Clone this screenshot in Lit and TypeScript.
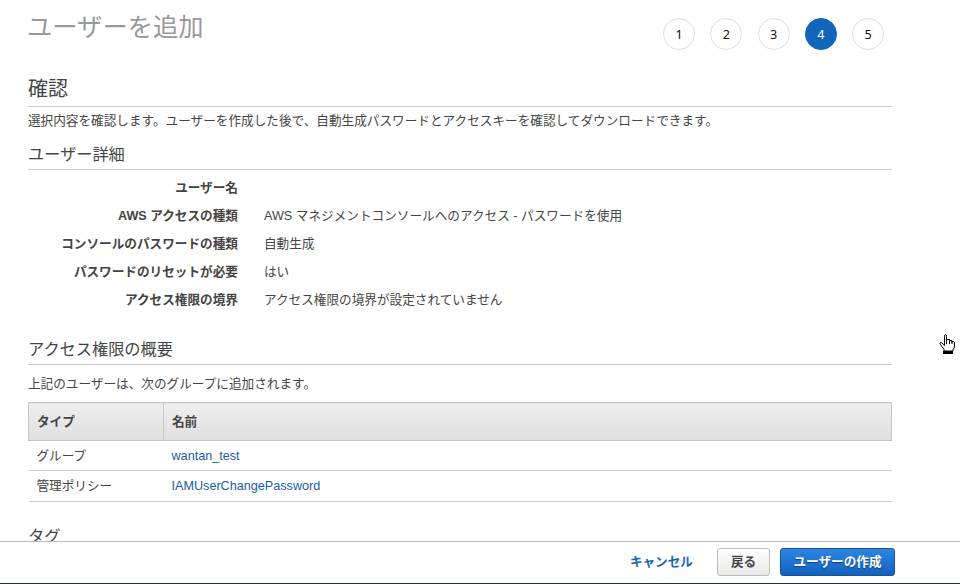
import { LitElement, html, css, svg } from "lit";
import { customElement } from "lit/decorators.js";
import { classMap } from "lit/directives/class-map.js";

const STEPS = [1, 2, 3, 4, 5];
const ACTIVE_STEP = 4;

const DETAILS: [string, string][] = [
  ["ユーザー名", ""],
  ["AWS アクセスの種類", "AWS マネジメントコンソールへのアクセス - パスワードを使用"],
  ["コンソールのパスワードの種類", "自動生成"],
  ["パスワードのリセットが必要", "はい"],
  ["アクセス権限の境界", "アクセス権限の境界が設定されていません"],
];

const GRANTS: [string, string][] = [
  ["グループ", "wantan_test"],
  ["管理ポリシー", "IAMUserChangePassword"],
];

const hand = svg`
  <path d="M5.5 11.5V2.5Q5.5 .5 6.5 .5Q7.5 .5 7.5 2.5V7.5V5.5H10.5V7.5V6.5H13V8.5V7.5H14.5Q15.5 8 15.5 9V13L14 15.5V17H5V15.5L1.5 10.5Q.5 9 1.5 8.5Q3 8 5.5 11.5Z" fill="#fff" stroke="#000"/>
  <path d="M10.5 6V10M13 7V10M7.5 6V10" stroke="#000" fill="none"/>
  <path d="M4 17H14V20H4Z" fill="#000"/>`;

@customElement("app-root")
export class AppRoot extends LitElement {
  static styles = css`
    :host {
      display: flex;
      flex-direction: column;
      position: relative;
      box-sizing: border-box;
      width: 960px;
      height: 584px;
      overflow: hidden;
      background: #fff;
      color: #444;
      font: 12.64px/20px "Liberation Sans", "Noto Sans CJK JP", sans-serif;
    }
    * { box-sizing: border-box; }
    h1, h2, h3, p, dl, dd, dt { margin: 0; font-weight: 400; }
    main {
      height: 541px;
      overflow: hidden;
      padding: 0 68px 0 28px;
    }
    .top {
      display: flex;
      justify-content: space-between;
      height: 74px;
      padding-right: 8px;
    }
    h1 { margin-left: -1px; font-size: 25.3px; line-height: 36px; padding-top: 9px; color: #999; }
    .steps { display: flex; gap: 15.25px; padding-top: 18px; }
    .step {
      width: 32px;
      height: 32px;
      border: 1px solid #ddd;
      border-radius: 50%;
      text-align: center;
      line-height: 31px;
      font-family: "Noto Sans", sans-serif;
      color: #111;
    }
    .active { background: #1166bb; border-color: #1166bb; color: #fff; }
    h2 { height: 33px; padding-top: 1px; font-size: 20px; line-height: 29px; border-bottom: 1px solid #ccc; }
    .lead { height: 34px; padding-top: 4px; }
    h3 { height: 29px; font-size: 16.2px; line-height: 26px; border-bottom: 1px solid #ccc; }
    dl {
      display: grid;
      grid-template-columns: 210px 1fr;
      grid-auto-rows: 28px;
      column-gap: 26px;
      line-height: 28px;
      padding-top: 4px;
      height: 166px;
    }
    dt { text-align: right; font-weight: 700; }
    .note { height: 37px; padding-top: 9px; }
    .table { width: 100%; border-collapse: collapse; table-layout: fixed; margin-bottom: 21px; }
    .type { width: 135px; }
    th {
      height: 38px;
      padding: 0 8px;
      text-align: left;
      border: 1px solid #c5c5c5;
      background: linear-gradient(#eee, #dfdfdf);
    }
    td { height: 30px; padding: 0 8px; border-bottom: 1px solid #ccc; }
    tr:last-child td { height: 31px; }
    a { color: #1a5ba8; }
    footer {
      display: flex;
      align-items: flex-start;
      justify-content: flex-end;
      height: 43px;
      padding: 6px 65px 0 0;
      border-top: 1px solid #bbb;
      border-bottom: 1px solid #232f3e;
      font-weight: 700;
      line-height: 28px;
    }
    .cancel { margin-right: 24px; color: #1a66b3; }
    button {
      height: 28px;
      padding: 0;
      border: 1px solid #bbb;
      border-radius: 3px;
      font: inherit;
      line-height: 26px;
      color: #444;
      background: linear-gradient(#fff, #e8e8e8);
    }
    .back { width: 53px; margin-right: 10px; }
    .create {
      width: 115px;
      color: #fff;
      border-color: #1b5295;
      background: linear-gradient(#2d86e2, #1261bd);
      text-shadow: 0 1px 1px #0b4180;
    }
    .hand { position: absolute; left: 939px; top: 334px; width: 17px; height: 21px; }
  `;

  render() {
    return html`
      <main>
        <div class="top">
          <h1>ユーザーを追加</h1>
          <div class="steps">
            ${STEPS.map((n) => html`<div class=${classMap({ step: true, active: n === ACTIVE_STEP })}>${n}</div>`)}
          </div>
        </div>
        <h2>確認</h2>
        <p class="lead">選択内容を確認します。ユーザーを作成した後で、自動生成パスワードとアクセスキーを確認してダウンロードできます。</p>
        <h3>ユーザー詳細</h3>
        <dl>${DETAILS.map(([k, v]) => html`<dt>${k}</dt><dd>${v}</dd>`)}</dl>
        <h3>アクセス権限の概要</h3>
        <p class="note">上記のユーザーは、次のグループに追加されます。</p>
        <table class="table">
          <thead><tr><th class="type">タイプ</th><th>名前</th></tr></thead>
          <tbody>${GRANTS.map(([t, n]) => html`<tr><td>${t}</td><td><a>${n}</a></td></tr>`)}</tbody>
        </table>
        <h3>タグ</h3>
      </main>
      <footer>
        <a class="cancel">キャンセル</a>
        <button class="back">戻る</button>
        <button class="create">ユーザーの作成</button>
      </footer>
      <svg class="hand" viewBox="0 0 17 21">${hand}</svg>
    `;
  }
}
